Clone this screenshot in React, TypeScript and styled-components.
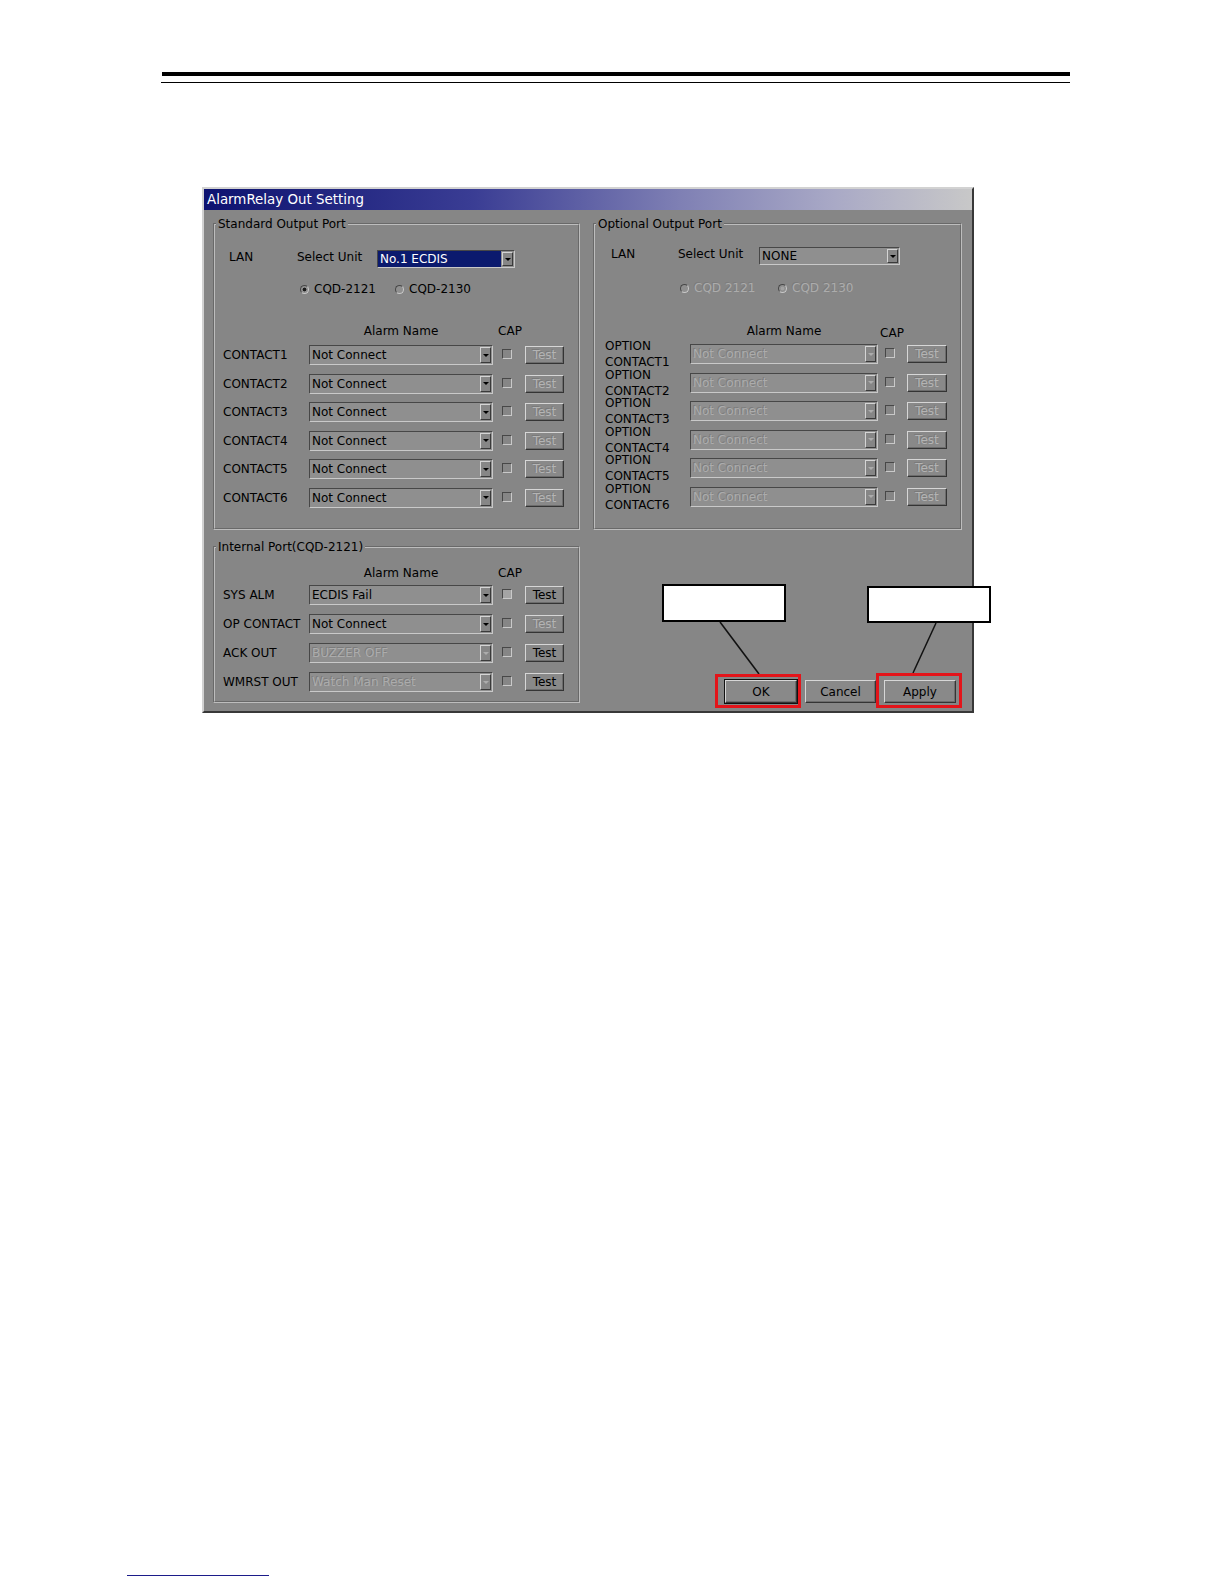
import React from 'react';
import styled, { createGlobalStyle } from 'styled-components';

const GlobalStyle = createGlobalStyle`
  html, body { margin: 0; padding: 0; background: #ffffff; }
  body { font-family: "DejaVu Sans", Verdana, sans-serif; }
  *, *::before, *::after { box-sizing: border-box; }
`;

const FACE = '#868686';
const FIELD = '#8f8f8f';
const DARK = '#474747';
const LIGHT = '#c9c9c9';
const DIS = '#acacac';

const Page = styled.div`
  width: 1224px;
  height: 1584px;
  display: flex;
  flex-direction: column;
  overflow: hidden;
`;

const HeaderRules = styled.header`
  margin: 72px 0 0 161px;
  width: 909px;
  display: flex;
  flex-direction: column;
  gap: 6px;
`;

const ThickRule = styled.div`
  height: 4px;
  margin-left: 1px;
  background: #000;
`;

const ThinRule = styled.div`
  height: 1px;
  background: #000;
`;

const FooterRule = styled.footer`
  margin: 862px 0 0 127px;
  width: 142px;
  height: 1px;
  background: #1c1c8a;
`;

const Dialog = styled.section`
  position: relative;
  margin: 104px 0 0 202px;
  width: 772px;
  height: 526px;
  background: ${FACE};
  border: 2px solid;
  border-color: #d2d2d2 #383838 #383838 #d2d2d2;
  display: flex;
  flex-direction: column;
  font-family: "DejaVu Sans", Verdana, sans-serif;
  font-size: 12px;
  color: #000;
`;

const TitleBar = styled.div`
  height: 21px;
  padding-left: 3px;
  display: flex;
  align-items: center;
  background: linear-gradient(90deg, #0d1270 0%, #3a3d94 35%, #7f80b4 62%, #a9a9c6 82%, #c8c8c8 100%);
  color: #ffffff;
  font-size: 13.4px;
  white-space: nowrap;
`;

const Body = styled.div`
  flex: 1;
  display: grid;
  grid-template-columns: 367px 369px;
  grid-template-rows: 313px 163px;
  column-gap: 13px;
  row-gap: 10px;
  padding: 7px 10px 8px 9px;
`;

const Group = styled.fieldset`
  margin: 0;
  padding: 0;
  min-width: 0;
  border: 2px groove #bdbdbd;
  display: flex;
  flex-direction: column;
`;

const Legend = styled.legend`
  margin-left: 1px;
  padding: 0 2px;
  line-height: 14px;
  font-size: 12px;
  white-space: nowrap;
`;

const UnitRow = styled.div<{ $top: number; $pad: number }>`
  display: flex;
  align-items: flex-start;
  height: 18px;
  margin-top: ${(p) => p.$top}px;
  padding-left: ${(p) => p.$pad}px;
`;

const FieldLabel = styled.span<{ $w: number }>`
  width: ${(p) => p.$w}px;
  line-height: 14px;
  white-space: nowrap;
`;

const ComboBox = styled.div<{ $w: number; $h: number }>`
  width: ${(p) => p.$w}px;
  height: ${(p) => p.$h}px;
  flex: none;
  display: flex;
  align-items: stretch;
  border: 1px solid;
  border-color: ${DARK} ${LIGHT} ${LIGHT} ${DARK};
  background: ${FIELD};
`;

const ComboText = styled.span<{ $selected?: boolean; $disabled?: boolean }>`
  flex: 1;
  display: flex;
  align-items: center;
  padding-left: 2px;
  overflow: hidden;
  white-space: nowrap;
  background: ${(p) => (p.$selected ? '#0b1a6e' : 'transparent')};
  color: ${(p) => (p.$selected ? '#ffffff' : p.$disabled ? DIS : '#000')};
  text-shadow: ${(p) => (p.$disabled ? '-1px -1px 0 #7c7c7c' : 'none')};
`;

const ComboArrow = styled.span<{ $disabled?: boolean }>`
  width: 11px;
  flex: none;
  margin: 1px;
  border: 1px solid;
  border-color: #d4d4d4 #3a3a3a #3a3a3a #d4d4d4;
  background: ${FACE};
  display: flex;
  align-items: center;
  justify-content: center;
  &::after {
    content: '';
    border-left: 3px solid transparent;
    border-right: 3px solid transparent;
    border-top: 3px solid ${(p) => (p.$disabled ? DIS : '#000')};
  }
`;

const RadioRow = styled.div<{ $top: number; $pad: number }>`
  display: flex;
  align-items: center;
  height: 14px;
  margin-top: ${(p) => p.$top}px;
  padding-left: ${(p) => p.$pad}px;
`;

const RadioOption = styled.span<{ $w: number; $disabled?: boolean }>`
  width: ${(p) => p.$w}px;
  display: flex;
  align-items: center;
  gap: 5px;
  white-space: nowrap;
  color: ${(p) => (p.$disabled ? DIS : '#000')};
  text-shadow: ${(p) => (p.$disabled ? '-1px -1px 0 #7c7c7c' : 'none')};
`;

const RadioDot = styled.span<{ $checked?: boolean; $disabled?: boolean }>`
  width: 9px;
  height: 9px;
  flex: none;
  border-radius: 50%;
  border: 1px solid;
  border-color: ${DARK} ${LIGHT} ${LIGHT} ${DARK};
  background: ${(p) =>
    p.$checked
      ? `radial-gradient(circle, ${p.$disabled ? '#a2a2a2' : '#1a1a1a'} 0 1.6px, ${FIELD} 2.2px)`
      : FIELD};
`;

const ColumnHeads = styled.div<{ $top: number; $pad: number }>`
  display: flex;
  height: 14px;
  line-height: 14px;
  margin-top: ${(p) => p.$top}px;
  padding-left: ${(p) => p.$pad}px;
`;

const HeadSpacer = styled.span<{ $w: number }>`
  width: ${(p) => p.$w}px;
  flex: none;
`;

const AlarmHead = styled.span<{ $w: number }>`
  width: ${(p) => p.$w}px;
  flex: none;
  text-align: center;
  white-space: nowrap;
`;

const CapHead = styled.span<{ $ml: number; $shift: number }>`
  width: 30px;
  flex: none;
  margin-left: ${(p) => p.$ml}px;
  padding-top: ${(p) => p.$shift}px;
  text-align: center;
`;

const RowList = styled.div<{ $top: number; $gap: number }>`
  display: flex;
  flex-direction: column;
  gap: ${(p) => p.$gap}px;
  margin-top: ${(p) => p.$top}px;
`;

const AlarmRowBox = styled.div<{ $pad: number }>`
  display: flex;
  align-items: center;
  height: 20px;
  padding-left: ${(p) => p.$pad}px;
`;

const RowLabel = styled.span<{ $w: number }>`
  width: ${(p) => p.$w}px;
  flex: none;
  line-height: 16px;
  white-space: pre;
`;

const CheckBox = styled.span<{ $ml: number; $filled?: boolean }>`
  width: 10px;
  height: 10px;
  flex: none;
  align-self: flex-start;
  margin: 4px 0 0 ${(p) => p.$ml}px;
  border: 1px solid;
  border-color: ${DARK} ${LIGHT} ${LIGHT} ${DARK};
  background: ${(p) => (p.$filled ? '#a4a4a4' : FACE)};
`;

const PushButton = styled.button<{ $w: number; $h: number; $ml?: number; $off?: boolean; $default?: boolean }>`
  width: ${(p) => p.$w}px;
  height: ${(p) => p.$h}px;
  flex: none;
  margin: 0 0 0 ${(p) => p.$ml ?? 0}px;
  padding: 0;
  font-family: inherit;
  font-size: 12px;
  background: #898989;
  border: 1px solid;
  border-color: #d6d6d6 #343434 #343434 #d6d6d6;
  box-shadow: inset -1px -1px 0 #6c6c6c;
  outline: ${(p) => (p.$default ? '1px solid #111' : 'none')};
  color: ${(p) => (p.$off ? '#b4b4b4' : '#000')};
  text-shadow: ${(p) => (p.$off ? '-1px -1px 0 #7a7a7a' : 'none')};
  cursor: default;
`;

const ButtonArea = styled.div`
  display: flex;
  align-items: flex-end;
  justify-content: flex-end;
  gap: 8px;
  padding-right: 6px;
`;

const Annotations = styled.svg`
  position: absolute;
  left: 0;
  top: 0;
  width: 800px;
  height: 530px;
  overflow: visible;
  pointer-events: none;
`;

type RowLayout = {
  pad: number;
  labelW: number;
  comboW: number;
  checkGap: number;
  testGap: number;
  testW: number;
};

type PortLayout = {
  unitTop: number;
  unitPad: number;
  lanW: number;
  selW: number;
  unitComboW: number;
  radioTop: number;
  radioPad: number;
  radioW: number;
  headTop: number;
  capMl: number;
  capShift: number;
  rowsTop: number;
  row: RowLayout;
};

type AlarmItem = {
  label: string;
  value: string;
  comboOff?: boolean;
  testOff?: boolean;
  capFilled?: boolean;
};

const stdRow: RowLayout = { pad: 8, labelW: 86, comboW: 184, checkGap: 9, testGap: 13, testW: 39 };
const optRow: RowLayout = { pad: 10, labelW: 85, comboW: 188, checkGap: 7, testGap: 12, testW: 40 };

const stdLayout: PortLayout = {
  unitTop: 19,
  unitPad: 14,
  lanW: 68,
  selW: 80,
  unitComboW: 138,
  radioTop: 14,
  radioPad: 85,
  radioW: 95,
  headTop: 28,
  capMl: 2,
  capShift: 0,
  rowsTop: 7,
  row: stdRow,
};

const optLayout: PortLayout = {
  unitTop: 16,
  unitPad: 16,
  lanW: 67,
  selW: 81,
  unitComboW: 141,
  radioTop: 16,
  radioPad: 85,
  radioW: 98,
  headTop: 29,
  capMl: -1,
  capShift: 2,
  rowsTop: 6,
  row: optRow,
};

const Combo: React.FC<{ w: number; h: number; value: string; selected?: boolean; off?: boolean }> = ({
  w,
  h,
  value,
  selected,
  off,
}) => (
  <ComboBox $w={w} $h={h}>
    <ComboText $selected={selected} $disabled={off}>
      {value}
    </ComboText>
    <ComboArrow $disabled={off} />
  </ComboBox>
);

const Heads: React.FC<{ top: number; row: RowLayout; capMl: number; capShift: number }> = ({
  top,
  row,
  capMl,
  capShift,
}) => (
  <ColumnHeads $top={top} $pad={row.pad}>
    <HeadSpacer $w={row.labelW} />
    <AlarmHead $w={row.comboW}>Alarm Name</AlarmHead>
    <CapHead $ml={capMl} $shift={capShift}>
      CAP
    </CapHead>
  </ColumnHeads>
);

const AlarmRow: React.FC<{ item: AlarmItem; row: RowLayout }> = ({ item, row }) => (
  <AlarmRowBox $pad={row.pad}>
    <RowLabel $w={row.labelW}>{item.label}</RowLabel>
    <Combo w={row.comboW} h={20} value={item.value} off={item.comboOff} />
    <CheckBox $ml={row.checkGap} $filled={item.capFilled} />
    <PushButton $w={row.testW} $h={18} $ml={row.testGap} $off={item.testOff}>
      Test
    </PushButton>
  </AlarmRowBox>
);

const PortGroup: React.FC<{
  title: string;
  layout: PortLayout;
  unitValue: string;
  unitSelected?: boolean;
  radios: { text: string; checked: boolean }[];
  radiosOff?: boolean;
  items: AlarmItem[];
}> = ({ title, layout, unitValue, unitSelected, radios, radiosOff, items }) => (
  <Group>
    <Legend>{title}</Legend>
    <UnitRow $top={layout.unitTop} $pad={layout.unitPad}>
      <FieldLabel $w={layout.lanW}>LAN</FieldLabel>
      <FieldLabel $w={layout.selW}>Select Unit</FieldLabel>
      <Combo w={layout.unitComboW} h={18} value={unitValue} selected={unitSelected} />
    </UnitRow>
    <RadioRow $top={layout.radioTop} $pad={layout.radioPad}>
      {radios.map((r) => (
        <RadioOption key={r.text} $w={layout.radioW} $disabled={radiosOff}>
          <RadioDot $checked={r.checked} $disabled={radiosOff} />
          {r.text}
        </RadioOption>
      ))}
    </RadioRow>
    <Heads top={layout.headTop} row={layout.row} capMl={layout.capMl} capShift={layout.capShift} />
    <RowList $top={layout.rowsTop} $gap={8.5}>
      {items.map((it) => (
        <AlarmRow key={it.label} item={it} row={layout.row} />
      ))}
    </RowList>
  </Group>
);

const nums = [1, 2, 3, 4, 5, 6];

const standardItems: AlarmItem[] = nums.map((n) => ({
  label: `CONTACT${n}`,
  value: 'Not Connect',
  testOff: true,
}));

const optionalItems: AlarmItem[] = nums.map((n) => ({
  label: `OPTION\nCONTACT${n}`,
  value: 'Not Connect',
  comboOff: true,
  testOff: true,
}));

const internalItems: AlarmItem[] = [
  { label: 'SYS ALM', value: 'ECDIS Fail', capFilled: true },
  { label: 'OP CONTACT', value: 'Not Connect', testOff: true },
  { label: 'ACK OUT', value: 'BUZZER OFF', comboOff: true },
  { label: 'WMRST OUT', value: 'Watch Man Reset', comboOff: true },
];

export default function App() {
  return (
    <Page>
      <GlobalStyle />
      <HeaderRules>
        <ThickRule />
        <ThinRule />
      </HeaderRules>

      <Dialog>
        <TitleBar>AlarmRelay Out Setting</TitleBar>
        <Body>
          <PortGroup
            title="Standard Output Port"
            layout={stdLayout}
            unitValue="No.1 ECDIS"
            unitSelected
            radios={[
              { text: 'CQD-2121', checked: true },
              { text: 'CQD-2130', checked: false },
            ]}
            items={standardItems}
          />
          <PortGroup
            title="Optional Output Port"
            layout={optLayout}
            unitValue="NONE"
            radios={[
              { text: 'CQD 2121', checked: false },
              { text: 'CQD 2130', checked: true },
            ]}
            radiosOff
            items={optionalItems}
          />
          <Group>
            <Legend>Internal Port(CQD-2121)</Legend>
            <Heads top={12} row={stdRow} capMl={2} capShift={0} />
            <RowList $top={5} $gap={9}>
              {internalItems.map((it) => (
                <AlarmRow key={it.label} item={it} row={stdRow} />
              ))}
            </RowList>
          </Group>
          <ButtonArea>
            <PushButton $w={72} $h={23} $default>
              OK
            </PushButton>
            <PushButton $w={71} $h={23}>
              Cancel
            </PushButton>
            <PushButton $w={72} $h={23}>
              Apply
            </PushButton>
          </ButtonArea>
        </Body>

        <Annotations viewBox="0 0 800 530">
          <line x1={516} y1={433} x2={555} y2={485} stroke="#111" strokeWidth={1.5} />
          <line x1={732} y1={434} x2={709} y2={484} stroke="#111" strokeWidth={1.5} />
          <rect x={459} y={396} width={122} height={36} fill="#fff" stroke="#000" strokeWidth={2} />
          <rect x={664} y={398} width={122} height={35} fill="#fff" stroke="#000" strokeWidth={2} />
          <rect x={512.5} y={486.5} width={83} height={31} fill="none" stroke="#e3141a" strokeWidth={3} />
          <rect x={673.5} y={485.5} width={83} height={32} fill="none" stroke="#e3141a" strokeWidth={3} />
        </Annotations>
      </Dialog>

      <FooterRule />
    </Page>
  );
}
